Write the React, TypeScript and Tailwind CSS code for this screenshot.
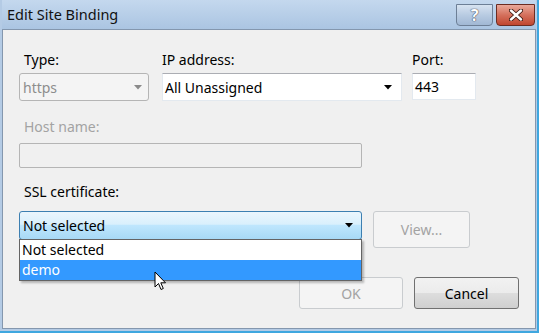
const font = { fontFamily: '"Noto Sans", "Open Sans", sans-serif' };

function Arrow({ color = "#000" }: { color?: string }) {
    return (
        <svg width="8" height="5" viewBox="0 0 8 5" className="shrink-0">
            <path d="M0 0 H8 L4 4.5 Z" fill={color} />
        </svg>
    );
}

function Cursor() {
    return (
        <svg width="13" height="21" viewBox="0 0 13 21" className="absolute left-[154px] top-[271px] z-20">
            <path d="M1 1 V16 L4.5 12.5 L7 18.5 L9.3 17.5 L6.8 11.8 H11.5 Z" fill="#fff" stroke="#000" strokeWidth="1" strokeLinejoin="round" />
        </svg>
    );
}

export default function App() {
    return (
        <div className="w-[539px] h-[333px] flex flex-col bg-[#b4cbe5] pl-[2px] pr-[1px] pb-[2px] border-r-2 border-b-2 border-[#3fa7df] text-[14px] text-black relative" style={font}>

            {/* ── Title bar ── */}
            <div className="h-[29px] flex items-center justify-between bg-gradient-to-b from-[#c4d8ee] to-[#abc5e2]">
                <span className="pl-[5px] text-[14.5px] text-[#111]">Edit Site Binding</span>
                <div className="flex gap-[3px] pr-[1px] self-start mt-[4px]">
                    <div className="w-[37px] h-[22px] rounded-b-[4px] border border-[#6d7f96] bg-gradient-to-b from-[#d7e3f1] via-[#b8cbe2] to-[#a1b8d4] flex items-center justify-center">
                        <span className="text-white font-bold text-[16px] leading-none" style={{ textShadow: "0 0 1px #334, 0 0 1px #334" }}>?</span>
                    </div>
                    <div className="w-[39px] h-[22px] rounded-b-[4px] border border-[#6b2c22] bg-gradient-to-b from-[#e9a99b] via-[#d4705c] to-[#c0452f] flex items-center justify-center">
                        <svg width="14" height="12" viewBox="0 0 14 12">
                            <path d="M2 1.5 L12 10.5 M12 1.5 L2 10.5" stroke="#3a1810" strokeWidth="4.2" strokeLinecap="round" />
                            <path d="M2 1.5 L12 10.5 M12 1.5 L2 10.5" stroke="#fff" strokeWidth="2.4" strokeLinecap="round" />
                        </svg>
                    </div>
                </div>
            </div>

            {/* ── Client area ── */}
            <div className="flex-1 bg-[#f0f0f0] border border-[#8497ae] flex flex-col pl-[16px] pr-[16px] pt-[20px]">

                {/* type / ip / port */}
                <div className="flex gap-[13px]">
                    <div className="flex flex-col gap-[3px] w-[130px]">
                        <span className="h-[20px] leading-[20px] pl-[5px]">Type:</span>
                        <div className="h-[28px] rounded-[3px] border border-[#b5b5b5] bg-[#f4f4f4] flex items-center justify-between pl-[3px] pr-[6px] text-[#8d8d8d]">
                            <span>https</span>
                            <Arrow color="#8a8a8a" />
                        </div>
                    </div>
                    <div className="flex flex-col gap-[3px] w-[240px]">
                        <span className="h-[20px] leading-[20px]">IP address:</span>
                        <div className="h-[28px] bg-white border border-[#e3e9ef] border-t-[#abadb3] flex items-center justify-between pl-[2px] pr-[9px]">
                            <span>All Unassigned</span>
                            <Arrow />
                        </div>
                    </div>
                    <div className="flex flex-col gap-[3px] w-[64px] ml-[-3px]">
                        <span className="h-[20px] leading-[20px]">Port:</span>
                        <div className="h-[27px] bg-white border border-[#e3e9ef] border-t-[#abadb3] flex items-center pl-[2px]">443</div>
                    </div>
                </div>

                {/* host name */}
                <span className="h-[20px] leading-[20px] pl-[5px] mt-[16px] text-[#a3a3a3]">Host name:</span>
                <div className="mt-[6px] w-[343px] h-[25px] rounded-[2px] border border-[#b5b5b5] bg-[#f0f0f0]" />

                {/* ssl certificate */}
                <span className="h-[20px] leading-[20px] pl-[5px] mt-[14px]">SSL certificate:</span>
                <div className="mt-[9px] flex gap-[11px] items-start">
                    <div className="relative w-[343px]">
                        <div className="h-[29px] rounded-[3px] border border-[#3c7fb1] bg-[linear-gradient(to_bottom,#eaf6fd_0%,#d9f0fc_45%,#bee6fd_50%,#a7d9f5_100%)] flex items-center justify-between pl-[3px] pr-[8px]">
                            <span>Not selected</span>
                            <Arrow />
                        </div>
                        <div className="absolute left-0 top-[28px] w-[343px] bg-white border border-[#646464] shadow-[2px_2px_2px_rgba(0,0,0,0.25)] z-10">
                            <div className="h-[20px] leading-[20px] pl-[2px]">Not selected</div>
                            <div className="h-[20px] leading-[20px] pl-[2px] bg-[#3399ff] text-white">demo</div>
                        </div>
                    </div>
                    <div className="w-[97px] h-[37px] rounded-[3px] border border-[#c9cccf] bg-[#f4f4f4] flex items-center justify-center text-[#a3a3a3]">
                        View...
                    </div>
                </div>

                {/* ok / cancel */}
                <div className="mt-[29px] flex justify-end gap-[11px]">
                    <div className="w-[104px] h-[32px] rounded-[3px] border border-[#c9cccf] bg-[#f4f4f4] flex items-center justify-center text-[#a3a3a3]">OK</div>
                    <div className="w-[105px] h-[32px] rounded-[3px] border border-[#707070] bg-[linear-gradient(to_bottom,#f2f2f2_0%,#ebebeb_50%,#dddddd_51%,#cfcfcf_100%)] flex items-center justify-center">Cancel</div>
                </div>
            </div>

            <Cursor />
        </div>
    );
}
